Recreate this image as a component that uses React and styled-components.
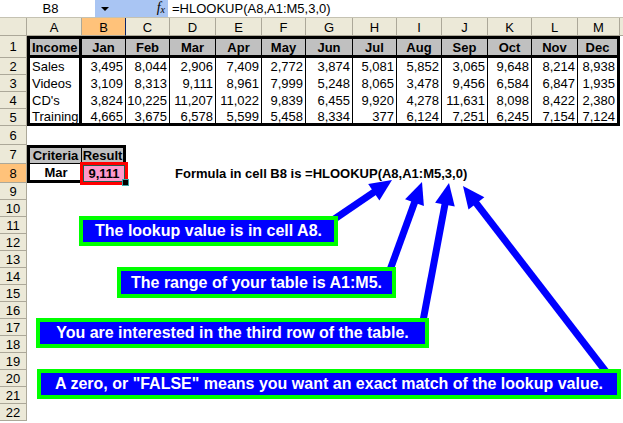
import React from "react";
import styled, { createGlobalStyle } from "styled-components";

const GlobalStyle = createGlobalStyle`
  html, body {
    margin: 0;
    padding: 0;
    background: #ffffff;
    font-family: "Liberation Sans", Arial, sans-serif;
  }
`;

const colWidths = [27, 55, 44, 44, 46, 46, 44, 47, 44, 45, 46, 44, 46, 42];
const rowHeights = [22, 17, 17, 17, 17, 19, 19, 19, 17, 17, 17, 17, 17, 17, 17, 17, 17, 17, 17, 17, 17, 17];
const letters = ["A", "B", "C", "D", "E", "F", "G", "H", "I", "J", "K", "L", "M"];

const table = [
  ["Income", "Jan", "Feb", "Mar", "Apr", "May", "Jun", "Jul", "Aug", "Sep", "Oct", "Nov", "Dec"],
  ["Sales", "3,495", "8,044", "2,906", "7,409", "2,772", "3,874", "5,081", "5,852", "3,065", "9,648", "8,214", "8,938"],
  ["Videos", "3,109", "8,313", "9,111", "8,961", "7,999", "5,248", "8,065", "3,478", "9,456", "6,584", "6,847", "1,935"],
  ["CD's", "3,824", "10,225", "11,207", "11,022", "9,839", "6,455", "9,920", "4,278", "11,631", "8,098", "8,422", "2,380"],
  ["Training", "4,665", "3,675", "6,578", "5,599", "5,458", "8,334", "377", "6,124", "7,251", "6,245", "7,154", "7,124"],
];

const callouts = [
  { text: "The lookup value is in cell A8.", left: 79, top: 216, w: 259, h: 30 },
  { text: "The range of your table is A1:M5.", left: 117, top: 267, w: 279, h: 31 },
  { text: "You are interested in the third row of the table.", left: 36, top: 318, w: 393, h: 30 },
  { text: "A zero, or \"FALSE\" means you want an exact match of the lookup value.", left: 37, top: 369, w: 584, h: 30 },
];

const arrows = [
  { from: [333, 220], to: [392, 180] },
  { from: [390, 270], to: [422, 182] },
  { from: [423, 321], to: [449, 183] },
  { from: [607, 373], to: [463, 186] },
];

function cellInfo(r, c) {
  // r: 1-based row, c: 0-based column (A = 0)
  const info = { text: "", align: "left" };
  if (r >= 1 && r <= 5) {
    info.text = table[r - 1][c];
    info.bb = r === 1 || r === 5 ? 3 : 0;
    info.bt = r === 1 ? 3 : 0;
    info.bl = c === 0 ? 3 : 0;
    info.br = c === 0 || c === 12 ? 3 : 1;
    if (r === 1) {
      info.bg = "#c0c0c0";
      info.bold = true;
      info.align = c === 0 ? "left" : "center";
    } else {
      info.align = c === 0 ? "left" : "right";
    }
  }
  if (r === 7 && c <= 1) {
    info.text = c === 0 ? "Criteria" : "Result";
    info.bg = "#c0c0c0";
    info.bold = true;
    info.align = "center";
    info.bt = 3;
    info.bl = c === 0 ? 3 : 0;
    info.br = c === 0 ? 1 : 3;
    info.bb = 1;
  }
  if (r === 8 && c === 0) {
    info.text = "Mar";
    info.bold = true;
    info.align = "center";
    info.bl = 3;
    info.bb = 3;
  }
  if (r === 8 && c === 1) {
    info.text = "9,111";
    info.bold = true;
    info.align = "center";
    info.bg = "#ff99cc";
    info.selected = true;
  }
  if (r === 8 && c === 3) {
    info.text = "Formula in cell B8 is =HLOOKUP(A8,A1:M5,3,0)";
    info.bold = true;
    info.overflow = true;
  }
  return info;
}

function arrowShapes({ from, to }) {
  const dx = to[0] - from[0];
  const dy = to[1] - from[1];
  const len = Math.hypot(dx, dy);
  const ux = dx / len;
  const uy = dy / len;
  const L = 22;
  const W = 10;
  const bx = to[0] - ux * L;
  const by = to[1] - uy * L;
  const nx = -uy;
  const ny = ux;
  return {
    line: [from[0], from[1], bx + ux * 2, by + uy * 2],
    head: `${to[0]},${to[1]} ${bx + nx * W},${by + ny * W} ${bx - nx * W},${by - ny * W}`,
  };
}

export default function App() {
  return (
    <Page>
      <GlobalStyle />
      <FormulaBar>
        <NameBox>B8</NameBox>
        <BarButtons>
          <DropArrow />
          <Fx>
            f<sub>x</sub>
          </Fx>
        </BarButtons>
        <FormulaInput>=HLOOKUP(A8,A1:M5,3,0)</FormulaInput>
      </FormulaBar>
      <Sheet>
        <Corner />
        {letters.map((l, i) => (
          <ColHeader key={l} $active={i === 1}>
            {l}
          </ColHeader>
        ))}
        <ColHeader />
        {rowHeights.map((_, ri) => {
          const r = ri + 1;
          return (
            <React.Fragment key={r}>
              <RowHeader $active={r === 8}>{r}</RowHeader>
              {letters.map((l, c) => {
                const info = cellInfo(r, c);
                return (
                  <Cell
                    key={l}
                    $bg={info.bg}
                    $bold={info.bold}
                    $align={info.align}
                    $bt={info.bt}
                    $br={info.br}
                    $bb={info.bb}
                    $bl={info.bl}
                    $selected={info.selected}
                    $overflow={info.overflow}
                  >
                    {info.text}
                    {info.selected && <FillHandle />}
                  </Cell>
                );
              })}
              <Cell />
            </React.Fragment>
          );
        })}
      </Sheet>
      <Arrows width="623" height="423" viewBox="0 0 623 423">
        {arrows.map((a, i) => {
          const s = arrowShapes(a);
          return (
            <g key={i} fill="#0000ff" stroke="#0000ff">
              <line
                x1={s.line[0]}
                y1={s.line[1]}
                x2={s.line[2]}
                y2={s.line[3]}
                strokeWidth="7"
              />
              <polygon points={s.head} strokeWidth="0" />
            </g>
          );
        })}
      </Arrows>
      {callouts.map((c) => (
        <Callout key={c.text} $left={c.left} $top={c.top} $w={c.w} $h={c.h}>
          {c.text}
        </Callout>
      ))}
    </Page>
  );
}

const Page = styled.div`
  position: relative;
  width: 623px;
  height: 423px;
  overflow: hidden;
  background: #ffffff;
  font-family: "Liberation Sans", Arial, sans-serif;
  font-size: 13px;
  color: #000000;
`;

const FormulaBar = styled.div`
  display: flex;
  height: 18px;
  background: #ffffff;
  border-bottom: 1px solid #c5c2b2;
  box-sizing: border-box;
`;

const NameBox = styled.div`
  width: 95px;
  display: flex;
  align-items: center;
  justify-content: center;
  font-size: 13px;
  padding-left: 6px;
  box-sizing: border-box;
`;

const BarButtons = styled.div`
  width: 73px;
  background: #a9c5f3;
  display: flex;
  align-items: center;
  justify-content: space-between;
  padding: 0 3px 0 6px;
  box-sizing: border-box;
`;

const DropArrow = styled.div`
  width: 0;
  height: 0;
  border-left: 4px solid transparent;
  border-right: 4px solid transparent;
  border-top: 4px solid #000000;
`;

const Fx = styled.div`
  font-family: "Liberation Serif", "Times New Roman", serif;
  font-style: italic;
  font-size: 14px;
  line-height: 14px;
  color: #000000;

  sub {
    font-size: 10px;
    vertical-align: -1px;
  }
`;

const FormulaInput = styled.div`
  flex: 1;
  display: flex;
  align-items: center;
  padding-left: 4px;
  font-size: 13px;
  white-space: nowrap;
`;

const Sheet = styled.div`
  display: grid;
  grid-template-columns: ${colWidths.map((w) => `${w}px`).join(" ")} 1fr;
  grid-template-rows: 18px ${rowHeights.map((h) => `${h}px`).join(" ")} 1fr;
  height: 405px;
`;

const HeaderBase = styled.div`
  background: #ece9d8;
  border-right: 1px solid #aca899;
  border-bottom: 1px solid #aca899;
  box-sizing: border-box;
  display: flex;
  align-items: center;
  justify-content: center;
  font-size: 13px;
  color: #000000;
`;

const Corner = styled(HeaderBase)``;

const ColHeader = styled(HeaderBase)`
  background: ${(p) => (p.$active ? "#ffc27a" : "#ece9d8")};
  border-right-color: ${(p) => (p.$active ? "#0a246a" : "#aca899")};
  padding-top: 1px;
`;

const RowHeader = styled(HeaderBase)`
  background: ${(p) => (p.$active ? "#ffc27a" : "#ece9d8")};
`;

const Cell = styled.div`
  position: relative;
  box-sizing: border-box;
  background: ${(p) => p.$bg || "#ffffff"};
  font-weight: ${(p) => (p.$bold ? 700 : 400)};
  font-size: 13px;
  display: flex;
  align-items: center;
  justify-content: ${(p) =>
    p.$align === "right" ? "flex-end" : p.$align === "center" ? "center" : "flex-start"};
  padding: 0 2px;
  white-space: nowrap;
  overflow: ${(p) => (p.$overflow || p.$selected ? "visible" : "hidden")};
  border-style: solid;
  border-color: #000000;
  border-width: ${(p) => `${p.$bt || 0}px ${p.$br || 0}px ${p.$bb || 0}px ${p.$bl || 0}px`};
  z-index: ${(p) => (p.$overflow || p.$selected ? 1 : 0)};
  ${(p) =>
    p.$selected &&
    `
    margin: -2px -2px -2px -2px;
    border: 3px solid #ff0000;
    box-shadow: inset 0 0 0 1px #1e5e4e;
    padding: 0;
  `}
  ${(p) => p.$overflow && `padding-left: 5px;`}
`;

const FillHandle = styled.span`
  position: absolute;
  right: -4px;
  bottom: -4px;
  width: 5px;
  height: 5px;
  background: #000000;
  border: 1px solid #3aa6a6;
`;

const Arrows = styled.svg`
  position: absolute;
  left: 0;
  top: 0;
  pointer-events: none;
  z-index: 2;
`;

const Callout = styled.div`
  position: absolute;
  left: ${(p) => p.$left}px;
  top: ${(p) => p.$top}px;
  width: ${(p) => p.$w}px;
  height: ${(p) => p.$h}px;
  box-sizing: border-box;
  border: 4px solid #00ff00;
  background: #0000ff;
  color: #ffffff;
  font-weight: 700;
  font-size: 16px;
  display: flex;
  align-items: center;
  justify-content: center;
  white-space: nowrap;
  z-index: 3;
`;
